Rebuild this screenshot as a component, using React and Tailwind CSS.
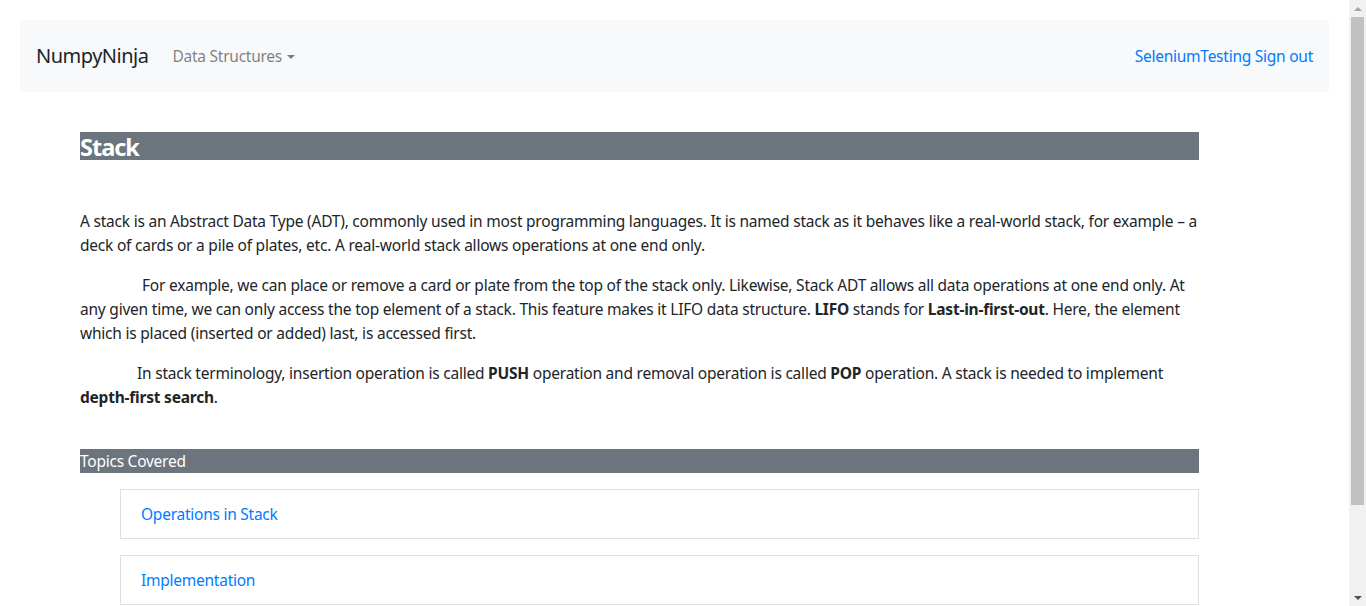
import { useState } from 'react';

const topics = ['Operations in Stack', 'Implementation', 'Applications'];

const font = { fontFamily: '"Noto Sans", "Open Sans", sans-serif' };

const NavBar = () => {
  const [open, setOpen] = useState(false);
  return (
    <nav className="flex items-center justify-between h-[72px] px-4 bg-[#f8f9fa]">
      <div className="flex items-center">
        <a href="#" className="text-[20px] leading-[30px] tracking-[-0.5px] text-[#212529] mr-6">
          NumpyNinja
        </a>
        <button
          onClick={() => setOpen(!open)}
          className="flex items-center text-[15.5px] leading-6 tracking-[-0.25px] text-black/50"
        >
          Data Structures
          <span className="ml-[5px] mt-[2px] border-x-[4px] border-t-[4.5px] border-x-transparent border-t-black/50" />
        </button>
      </div>
      <div className="text-[15.5px] leading-6 tracking-[-0.25px] text-[#007bff]">
        <a href="#">SeleniumTesting</a> <a href="#">Sign out</a>
      </div>
    </nav>
  );
};

// fake window scrollbar, as in the screenshot
const ScrollBar = () => (
  <div className="fixed right-0 top-0 w-[17px] h-screen bg-[#f1f1f1] flex flex-col items-center">
    <div className="h-[17px] flex items-center justify-center">
      <span className="border-x-[4px] border-b-[4px] border-x-transparent border-b-[#a3a3a3]" />
    </div>
    <div className="w-[13px] h-[488px] bg-[#c1c1c1]" />
    <div className="flex-1" />
    <div className="h-[17px] flex items-center justify-center">
      <span className="border-x-[4px] border-t-[4px] border-x-transparent border-t-[#505050]" />
    </div>
  </div>
);

export default function App() {
  return (
    <div className="bg-white min-h-screen text-[#212529]" style={font}>
      <div className="p-5 mr-[17px]">
        <NavBar />

        <div className="ml-[60px] w-[1119px] pt-10 pb-[65px]">
          {/* Title */}
          <h3 className="bg-[#6c757d] text-white font-bold text-[23.5px] h-7 pt-px leading-[28px] tracking-[-1px]">
            Stack
          </h3>

          <div className="mt-[49px] text-[15.5px] leading-6 tracking-[-0.22px]">
            <p className="mb-4">
              A stack is an Abstract Data Type (ADT), commonly used in most programming languages. It is named stack as it behaves like a real-world stack, for example – a deck of cards or a pile of plates, etc. A real-world stack allows operations at one end only.
            </p>
            <p className="mb-4 indent-[62px]">
              For example, we can place or remove a card or plate from the top of the stack only. Likewise, Stack ADT allows all data operations at one end only. At any given time, we can only access the top element of a stack. This feature makes it LIFO data structure. <b>LIFO</b> stands for <b>Last-in-first-out</b>. Here, the element which is placed (inserted or added) last, is accessed first.
            </p>
            <p className="indent-[57px]">
              In stack terminology, insertion operation is called <b>PUSH</b> operation and removal operation is called <b>POP</b> operation. A stack is needed to implement <b>depth-first search</b>.
            </p>
          </div>

          {/* Topics */}
          <div className="mt-10 bg-[#6c757d] text-white text-[15.5px] leading-6 tracking-[-0.25px]">
            Topics Covered
          </div>
          <ul className="ml-10 mt-4 space-y-4">
            {topics.map((t) => (
              <li key={t} className="border border-[#dfdfdf] h-[50px] flex items-center px-5 pt-px">
                <a href="#" className="text-[15.5px] tracking-[-0.25px] text-[#007bff]">
                  {t}
                </a>
              </li>
            ))}
          </ul>
        </div>
      </div>
      <ScrollBar />
    </div>
  );
}
